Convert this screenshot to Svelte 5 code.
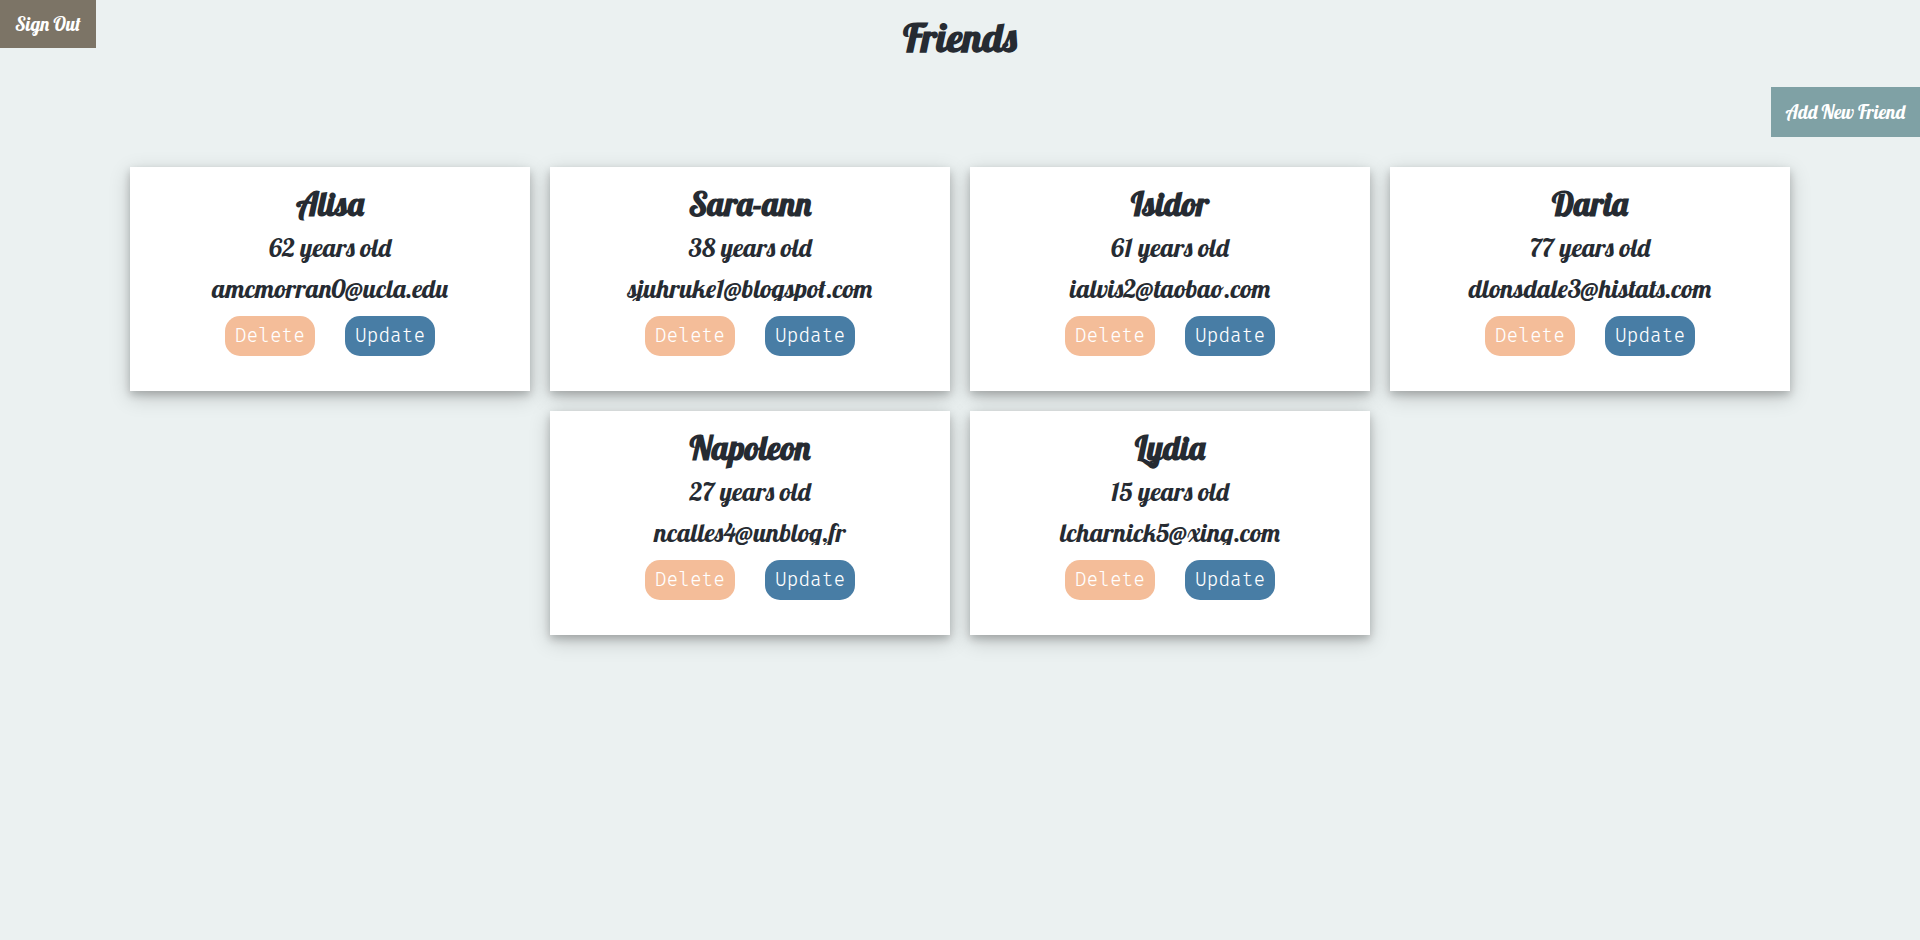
<script>
  let friends = $state([
    { id: 1, name: 'Alisa', age: 62, email: 'amcmorran0@ucla.edu' },
    { id: 2, name: 'Sara-ann', age: 38, email: 'sjuhruke1@blogspot.com' },
    { id: 3, name: 'Isidor', age: 61, email: 'ialvis2@taobao.com' },
    { id: 4, name: 'Daria', age: 77, email: 'dlonsdale3@histats.com' },
    { id: 5, name: 'Napoleon', age: 27, email: 'ncalles4@unblog.fr' },
    { id: 6, name: 'Lydia', age: 15, email: 'lcharnick5@xing.com' }
  ]);

  function remove(id) {
    friends = friends.filter((friend) => friend.id !== id);
  }
</script>

<div class="page">
  <header>
    <button class="sign-out" type="button">Sign Out</button>
    <h1>Friends</h1>
  </header>

  <div class="toolbar">
    <button class="add" type="button">Add New Friend</button>
  </div>

  <main>
    {#each friends as friend (friend.id)}
      <article>
        <h2>{friend.name}</h2>
        <p class="age">{friend.age} years old</p>
        <p class="email">{friend.email}</p>
        <div class="actions">
          <button class="delete" type="button" onclick={() => remove(friend.id)}>Delete</button>
          <button class="update" type="button">Update</button>
        </div>
      </article>
    {/each}
  </main>
</div>

<style>
  :global(body) {
    margin: 0;
    background: #ebf1f1;
  }

  .page {
    color: #262b32;
    font-family: Lobster, 'Liberation Serif', serif;
    text-align: center;
  }

  h1,
  h2,
  p {
    margin: 0;
  }

  button {
    border: 0;
    color: #fff;
    cursor: pointer;
  }

  header {
    display: grid;
    grid-template-columns: 1fr auto 1fr;
    align-items: start;
  }

  h1 {
    padding-top: 12px;
    font-size: 40px;
    line-height: 50px;
  }

  .sign-out,
  .add {
    padding: 0 15px;
    font: inherit;
    font-size: 19px;
    line-height: 48px;
  }

  .sign-out {
    justify-self: start;
    background: #7c7466;
  }

  .toolbar {
    display: flex;
    justify-content: flex-end;
    margin-top: 25px;
  }

  .add {
    background: #7fa1a5;
    line-height: 50px;
  }

  main {
    display: flex;
    flex-wrap: wrap;
    justify-content: center;
    gap: 20px;
    padding: 30px 100px;
  }

  article {
    box-sizing: border-box;
    width: 400px;
    padding: 16px 20px 35px;
    background: #fff;
    box-shadow:
      0 4px 8px 0 rgba(0, 0, 0, 0.2),
      0 6px 20px 0 rgba(0, 0, 0, 0.19);
  }

  h2 {
    font-size: 33px;
    line-height: 42px;
  }

  .age,
  .email {
    font-size: 26px;
  }

  .age {
    margin-top: 6px;
    line-height: 34px;
  }

  .email {
    margin-top: 11px;
    overflow: hidden;
    line-height: 25px;
  }

  .actions {
    display: flex;
    justify-content: center;
    gap: 30px;
    margin-top: 15px;
  }

  .actions button {
    padding: 0 10px;
    border-radius: 15px;
    font: 300 19px/40px 'Fira Code', 'Liberation Mono', monospace;
  }

  .delete {
    background: #f4bd99;
  }

  .update {
    background: #487da5;
  }
</style>
